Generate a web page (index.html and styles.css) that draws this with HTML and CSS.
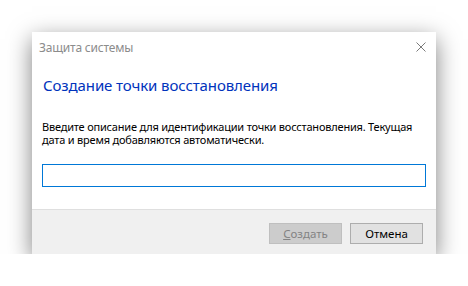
FILE: index.html
```html
<!DOCTYPE html>
<html lang="ru">
<head>
    <meta charset="UTF-8">
    <title>Защита системы</title>
    <link rel="stylesheet" href="styles.css">
</head>
<body>

<div class="dialog">
    <div class="titlebar">
        <span class="title">Защита системы</span>
        <svg class="close" width="10" height="10" viewBox="0 0 10 10">
            <path d="M0.5 0.5 L9.5 9.5 M9.5 0.5 L0.5 9.5" stroke="#7a7a7a" stroke-width="1" fill="none"/>
        </svg>
    </div>

    <div class="content">
        <h1>Создание точки восстановления</h1>
        <p>Введите описание для идентификации точки восстановления. Текущая дата и время добавляются автоматически.</p>
        <input type="text" class="desc">
    </div>

    <div class="footer">
        <button class="btn" disabled><u>С</u>оздать</button>
        <button class="btn">Отмена</button>
    </div>
</div>

</body>
</html>
```

FILE: styles.css
```css
body {
    margin: 0;
    padding: 32px 0 0 32px;
    background: #ffffff;
    font-family: "Noto Sans", "Open Sans", sans-serif;
}

.dialog {
    width: 404px;
    height: 222px;
    background: #ffffff;
    display: flex;
    flex-direction: column;
    box-shadow: 0 7px 22px rgba(0, 0, 0, 0.5);
}

.titlebar {
    height: 30px;
    display: flex;
    align-items: center;
    justify-content: space-between;
    padding: 0 10px 0 7px;
}

.title {
    font-size: 12px;
    color: #8c8c8c;
    letter-spacing: -0.2px;
}

.content {
    flex: 1;
    padding: 13px 10px 0 10px;
}

h1 {
    margin: 0 0 0 1px;
    font-size: 15px;
    font-weight: normal;
    line-height: 20px;
    color: #0033bc;
    letter-spacing: -0.1px;
}

p {
    margin: 25px 0 0 0;
    font-size: 11px;
    line-height: 13px;
    letter-spacing: -0.2px;
    color: #000000;
}

.desc {
    display: block;
    box-sizing: border-box;
    width: 384px;
    height: 23px;
    margin-top: 18px;
    border: 1px solid #0078d7;
    outline: none;
    padding: 0 4px;
}

.footer {
    height: 45px;
    background: #f0f0f0;
    border-top: 1px solid #dfdfdf;
    display: flex;
    justify-content: flex-end;
    align-items: flex-start;
    gap: 8px;
    padding: 13px 13px 0 0;
    box-sizing: border-box;
}

.btn {
    width: 73px;
    height: 21px;
    box-sizing: border-box;
    border: 1px solid #adadad;
    background: #e1e1e1;
    font-family: "Noto Sans", "Open Sans", sans-serif;
    font-size: 11.5px;
    color: #000000;
    padding: 0;
    line-height: 17px;
}

.btn:disabled {
    background: #cccccc;
    border-color: #bfbfbf;
    color: #838383;
}

.btn u {
    text-decoration-thickness: 1px;
}
```
